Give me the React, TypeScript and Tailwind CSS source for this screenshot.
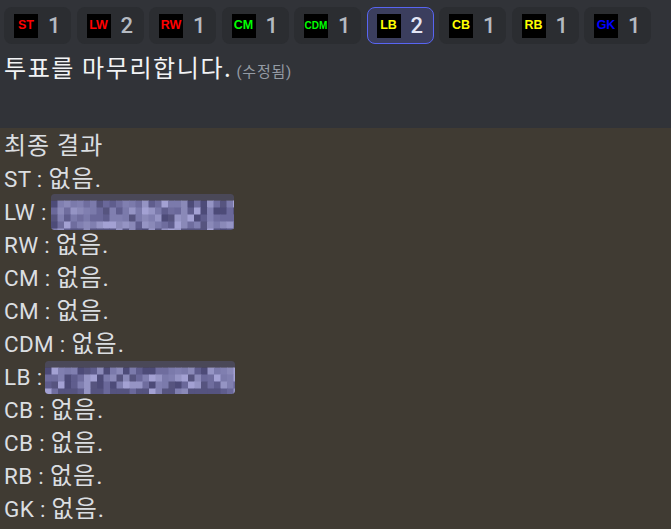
import React from "react";

type Pos = { label: string; color: string; count: number; small?: boolean; active?: boolean };

const positions: Pos[] = [
  { label: "ST", color: "text-[#ff0000]", count: 1 },
  { label: "LW", color: "text-[#ff0000]", count: 2 },
  { label: "RW", color: "text-[#ff0000]", count: 1 },
  { label: "CM", color: "text-[#00ff00]", count: 1 },
  { label: "CDM", color: "text-[#00ff00]", count: 1, small: true },
  { label: "LB", color: "text-[#ffff00]", count: 2, active: true },
  { label: "CB", color: "text-[#ffff00]", count: 1 },
  { label: "RB", color: "text-[#ffff00]", count: 1 },
  { label: "GK", color: "text-[#0000ff]", count: 1 },
];

const palette = ["#8a89b8", "#6f6d9e", "#5f5d8d", "#7b7aab", "#9594c4", "#56547f", "#6a689a", "#a3a1d3", "#4d4b78", "#807fb0"];

function Pixelated({ w, h, seed, className }: { w: number; h: number; seed: number; className?: string }) {
  let s = seed;
  const rnd = () => {
    s = (s * 9301 + 49297) % 233280;
    return s / 233280;
  };
  const bw = 6.5;
  const top = 6.5;
  const rows = Math.ceil((h - top) / 7);
  const cols = Math.ceil(w / bw);
  const rects: React.ReactNode[] = [];
  for (let r = 0; r < rows; r++) {
    for (let c = 0; c < cols; c++) {
      let col = palette[Math.floor(rnd() * palette.length)];
      if (r === rows - 1 && rnd() < 0.6) col = "#55537f";
      rects.push(<rect key={`${r}-${c}`} x={c * bw} y={top + r * 7} width={bw + 0.5} height={7.5} fill={col} />);
    }
  }
  return (
    <svg width={w} height={h} viewBox={`0 0 ${w} ${h}`} className={"block rounded-[3px] " + (className ?? "")}>
      <defs>
        <clipPath id={`clip${seed}`}>
          <rect x={0} y={0} width={w} height={h} rx={3} />
        </clipPath>
      </defs>
      <g clipPath={`url(#clip${seed})`}>
        <rect x={0} y={0} width={w} height={top} fill="#4a4858" />
        {rects}
      </g>
    </svg>
  );
}

function Ko({ children }: { children: React.ReactNode }) {
  return <span className="text-[24px] tracking-[1px]">{children}</span>;
}

function Row({ label, children }: { label: string; children: React.ReactNode }) {
  return (
    <div className="flex items-center h-[33px] whitespace-pre">
      <span className="text-[22.5px] tracking-[0.3px]">{label} : </span>
      {children}
    </div>
  );
}

export default function App() {
  const font = { fontFamily: 'Roboto, "Noto Sans CJK KR", sans-serif' };
  return (
    <div className="w-[671px] h-[529px] overflow-hidden bg-[#403b33]" style={font}>
      <div className="bg-[#313338] h-[128px] pt-[7px] pl-[4px]">
        <div className="flex gap-[5.5px]">
          {positions.map((p) => (
            <div
              key={p.label}
              className={
                "w-[67px] h-[37px] rounded-[8px] flex items-center gap-[10px] " +
                (p.active ? "bg-[#3b3e5e] border border-[#5865f2] pl-[9px]" : "bg-[#2b2d31] pl-[10px]")
              }
            >
              <div
                className={
                  "w-[24px] h-[24px] bg-black flex items-center justify-center font-bold " +
                  p.color +
                  (p.small ? " text-[10px]" : " text-[12.5px]")
                }
                style={{ fontFamily: '"Liberation Sans", Arial, sans-serif' }}
              >
                {p.label}
              </div>
              <span
                className={"text-[22px] leading-none font-medium " + (p.active ? "text-[#e3e5f5]" : "text-[#b5bac1]")}
              >
                {p.count}
              </span>
            </div>
          ))}
        </div>
        <div className="mt-[7px] flex items-baseline text-[#f2f3f5]">
          <span
            className="text-[24px] leading-[32px] tracking-[1.6px]"
            style={{ fontFamily: '"Noto Sans CJK KR", sans-serif' }}
          >
            투표를 마무리합니다.
          </span>
          <span className="ml-[4px] text-[15px] tracking-[0.8px] text-[#949ba4]">(수정됨)</span>
        </div>
      </div>
      <div className="pl-[4px] pt-[2px] text-[22px] leading-[33px] text-[#dbdee1]">
        <div className="h-[33px] flex items-center">
          <Ko>최종 결과</Ko>
        </div>
        <Row label="ST">
          <Ko>없음.</Ko>
        </Row>
        <Row label="LW">
          <Pixelated w={183} h={36} seed={17} className="ml-[-2px] mt-[-2px]" />
        </Row>
        <Row label="RW">
          <Ko>없음.</Ko>
        </Row>
        <Row label="CM">
          <Ko>없음.</Ko>
        </Row>
        <Row label="CM">
          <Ko>없음.</Ko>
        </Row>
        <Row label="CDM">
          <Ko>없음.</Ko>
        </Row>
        <Row label="LB">
          <Pixelated w={190} h={33} seed={91} className="ml-[-3px]" />
        </Row>
        <Row label="CB">
          <Ko>없음.</Ko>
        </Row>
        <Row label="CB">
          <Ko>없음.</Ko>
        </Row>
        <Row label="RB">
          <Ko>없음.</Ko>
        </Row>
        <Row label="GK">
          <Ko>없음.</Ko>
        </Row>
      </div>
    </div>
  );
}
